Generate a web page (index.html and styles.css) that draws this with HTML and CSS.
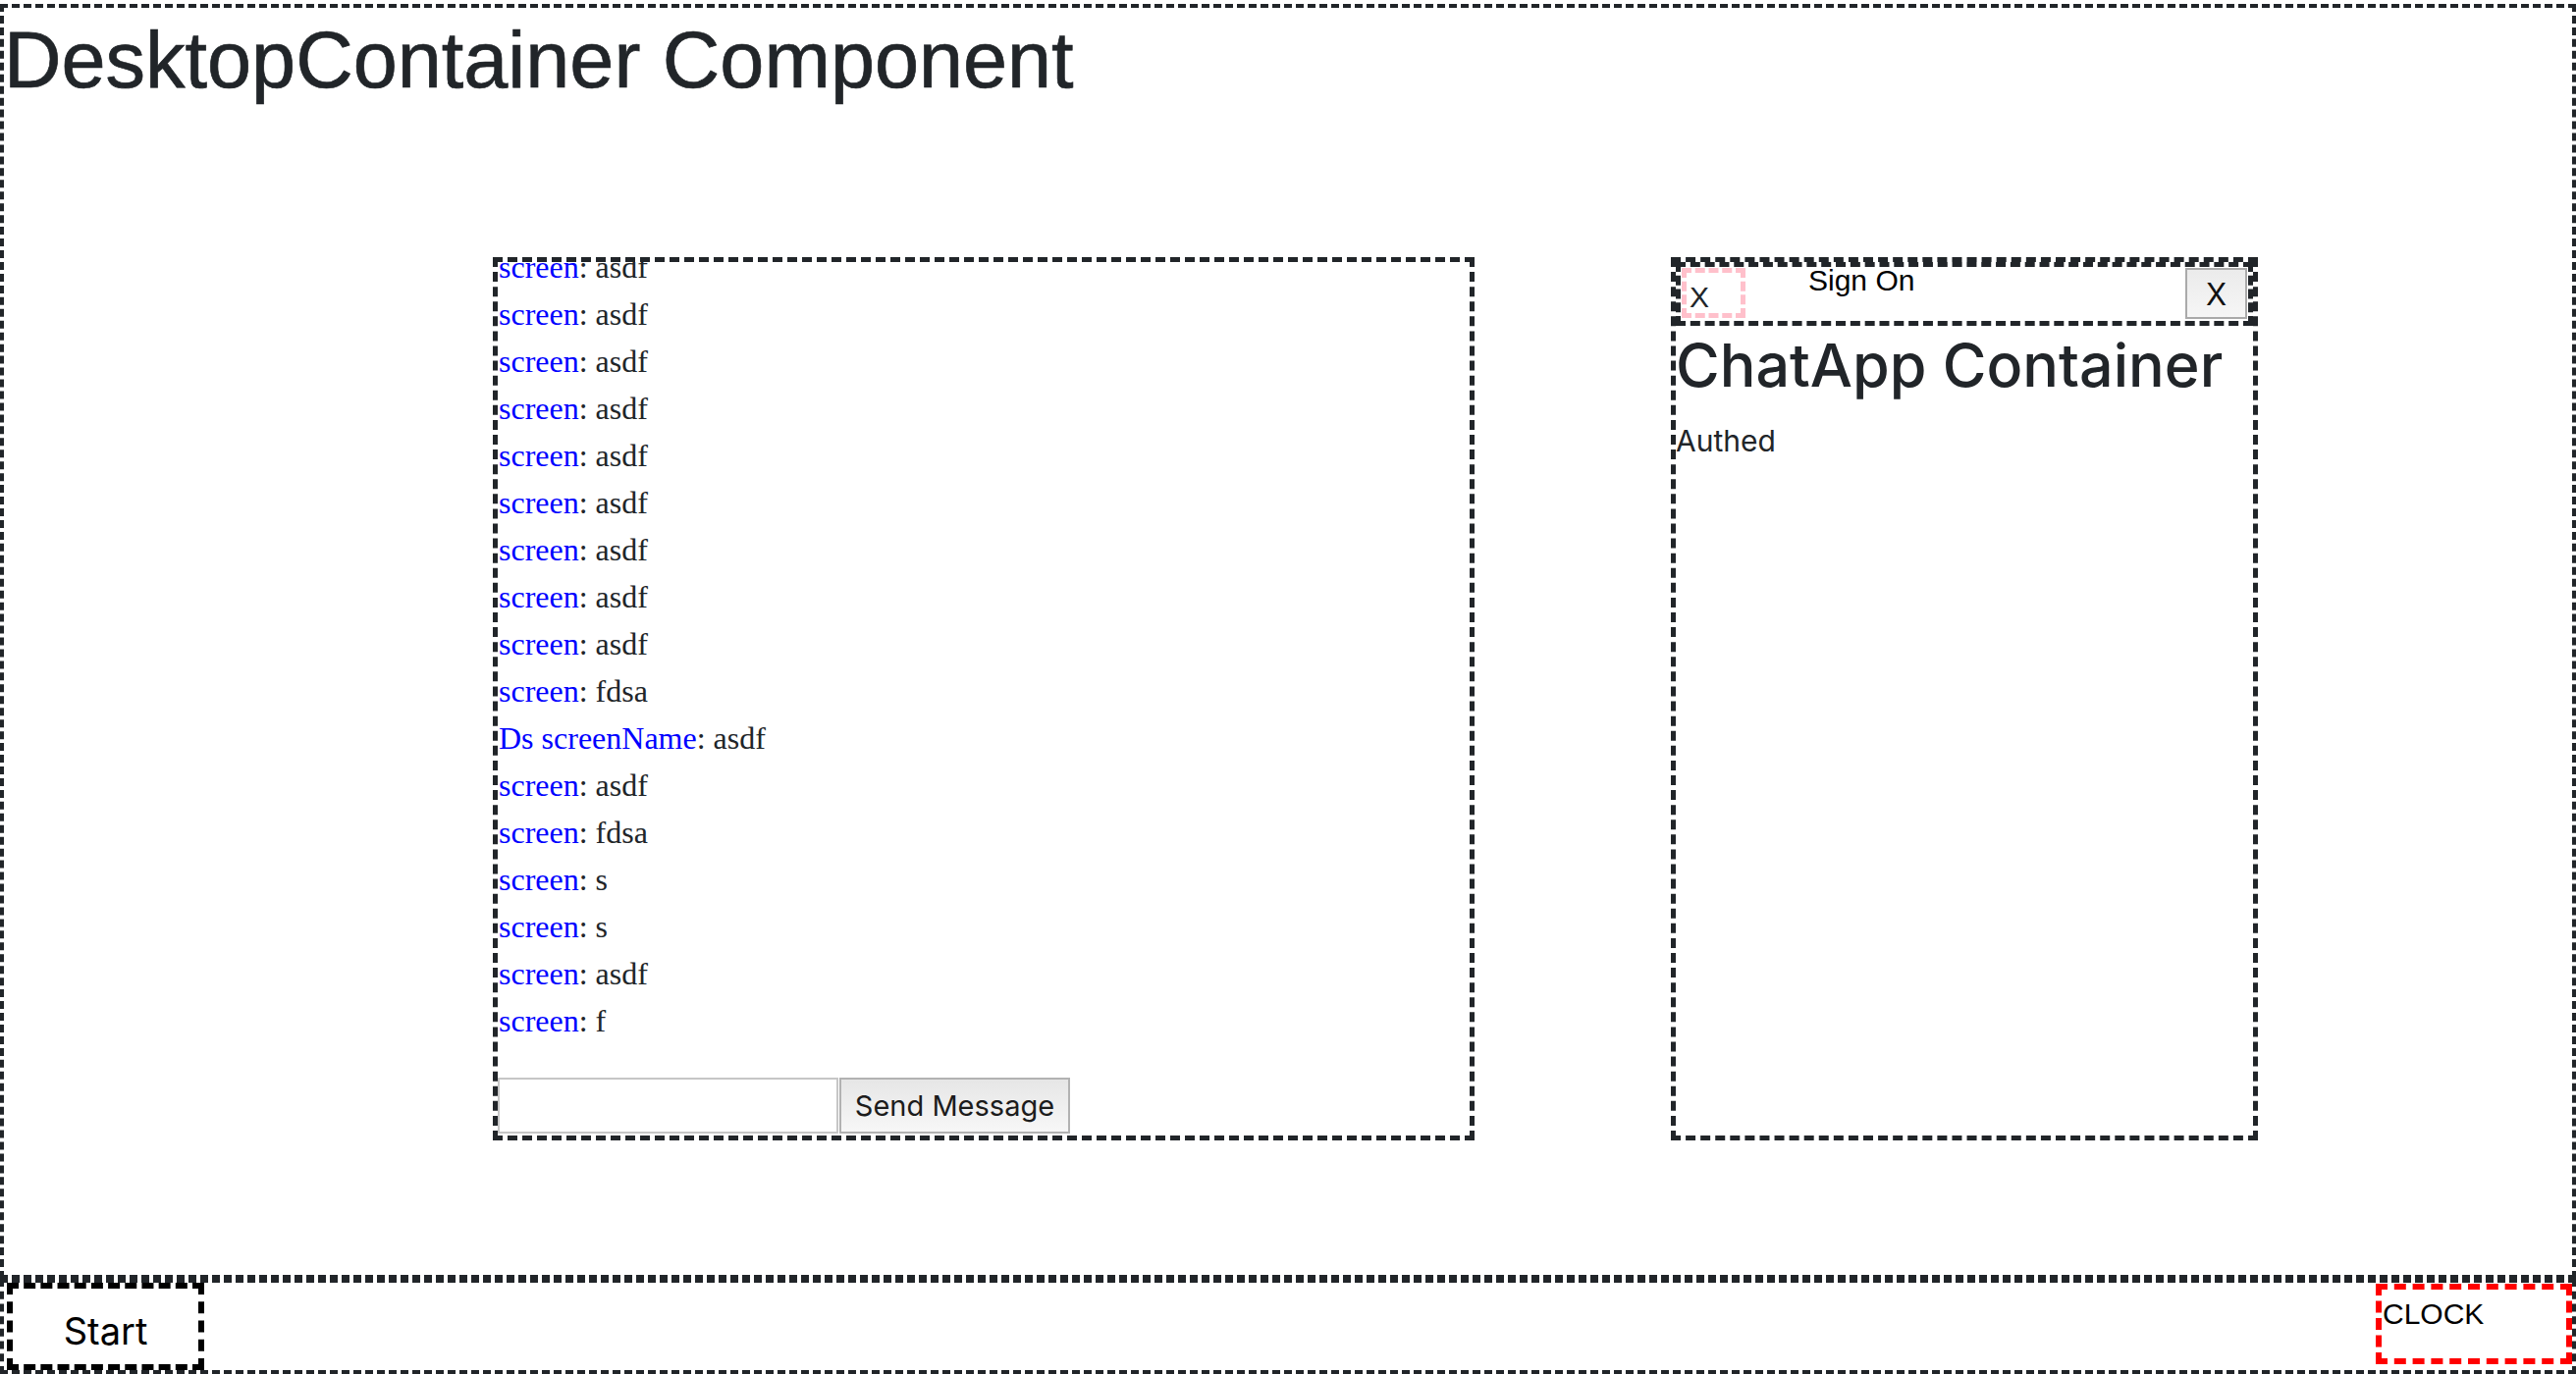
FILE: index.html
```html
<!DOCTYPE html>
<html lang="en">

<head>
    <meta charset="UTF-8">
    <title>Desktop</title>
    <meta name="viewport" content="width=device-width, initial-scale=1.0">
    <link rel="stylesheet" href="styles.css">
</head>

<body>
    <div class="desktop">
        <h1 class="desktop-title">DesktopContainer Component</h1>

        <div class="window chat-window">
            <div class="message-list">
                <div class="message"><span class="sender">screen</span>: asdf</div>
                <div class="message"><span class="sender">screen</span>: asdf</div>
                <div class="message"><span class="sender">screen</span>: asdf</div>
                <div class="message"><span class="sender">screen</span>: asdf</div>
                <div class="message"><span class="sender">screen</span>: asdf</div>
                <div class="message"><span class="sender">screen</span>: asdf</div>
                <div class="message"><span class="sender">screen</span>: asdf</div>
                <div class="message"><span class="sender">screen</span>: asdf</div>
                <div class="message"><span class="sender">screen</span>: asdf</div>
                <div class="message"><span class="sender">screen</span>: fdsa</div>
                <div class="message"><span class="sender">Ds screenName</span>: asdf</div>
                <div class="message"><span class="sender">screen</span>: asdf</div>
                <div class="message"><span class="sender">screen</span>: fdsa</div>
                <div class="message"><span class="sender">screen</span>: s</div>
                <div class="message"><span class="sender">screen</span>: s</div>
                <div class="message"><span class="sender">screen</span>: asdf</div>
                <div class="message"><span class="sender">screen</span>: f</div>
            </div>
            <form class="message-form">
                <input type="text" class="message-input">
                <button type="submit" class="send-btn">Send Message</button>
            </form>
        </div>

        <div class="window signon-window">
            <div class="title-bar">
                <div class="title-icon">X</div>
                <span class="title-text">Sign On</span>
                <button class="close-btn">X</button>
            </div>
            <div class="window-body">
                <h2>ChatApp Container</h2>
                <div class="status">Authed</div>
            </div>
        </div>
    </div>

    <div class="taskbar">
        <div class="start-btn">Start</div>
        <div class="clock">CLOCK</div>
    </div>
</body>

</html>
```

FILE: styles.css
```css
* {
    box-sizing: border-box;
}

body {
    margin: 0;
    padding-top: 4px;
    height: 100vh;
    display: flex;
    flex-direction: column;
    font-family: Inter, 'Noto Sans', sans-serif;
    color: #212529;
    background: #fff;
}

.desktop {
    flex: 1;
    position: relative;
    border: 4px dashed #212529;
    overflow: hidden;
}

.desktop-title {
    margin: 5px 0 0 0;
    font-family: 'Liberation Sans', Arial, sans-serif;
    font-size: 81px;
    font-weight: 400;
    line-height: 1.2;
    color: #212529;
    -webkit-text-stroke: 0.7px #212529;
}

.window {
    position: absolute;
    top: 254px;
    height: 900px;
    border: 5px dashed #212529;
    background: #fff;
    display: flex;
    flex-direction: column;
}

.chat-window {
    left: 498px;
    width: 1000px;
}

.signon-window {
    left: 1698px;
    width: 598px;
}

.message-list {
    flex: 1;
    min-height: 0;
    overflow: hidden;
    display: flex;
    flex-direction: column;
    justify-content: flex-end;
    margin-bottom: 34px;
}

.message {
    flex-shrink: 0;
    font-family: 'Liberation Serif', 'Times New Roman', serif;
    font-size: 32px;
    line-height: 48px;
    color: #212529;
    padding-left: 1px;
}

.sender {
    color: #0000ff;
}

.message-form {
    display: flex;
    align-items: center;
    gap: 1px;
    padding: 0 0 2px 0;
    margin: 0;
}

.message-input {
    width: 347px;
    height: 57px;
    border: 2px solid #c6c6c6;
    background: #fff;
    padding: 0 8px;
    font-size: 28px;
    outline: none;
}

.send-btn {
    width: 235px;
    height: 57px;
    border: 2px solid #b2b2b2;
    border-radius: 0;
    background: linear-gradient(#e6e6e6, #f7f7f7);
    font-family: Inter, sans-serif;
    font-size: 29px;
    color: #1c1c1c;
    padding: 0;
}

.title-bar {
    display: flex;
    align-items: flex-start;
    height: 65px;
    border: 5px dashed #212529;
    padding: 1px;
}

.title-icon {
    width: 65px;
    height: 51px;
    border: 5px dashed #ffc0cb;
    display: flex;
    align-items: flex-end;
    padding: 0 0 1px 3px;
    font-family: 'Liberation Sans', Arial, sans-serif;
    font-size: 30px;
    line-height: 1;
    color: #212529;
}

.title-text {
    margin-left: 64px;
    margin-right: auto;
    margin-top: -2px;
    font-family: 'Liberation Sans', Arial, sans-serif;
    font-size: 30px;
    line-height: 1;
    color: #000;
}

.close-btn {
    width: 63px;
    height: 52px;
    border: 2px solid #aaa;
    border-radius: 0;
    background: linear-gradient(#ebebeb, #f6f6f6);
    font-family: Inter, sans-serif;
    font-size: 31px;
    color: #111;
    padding: 0;
}

.window-body {
    flex: 1;
}

.window-body h2 {
    margin: 4px 0 18px 0;
    font-family: Inter, sans-serif;
    font-size: 61px;
    font-weight: 500;
    line-height: 1.2;
    color: #212529;
}

.status {
    font-size: 30px;
    line-height: 1.5;
    color: #212529;
}

.taskbar {
    height: 97px;
    border: 4px dashed #212529;
    display: flex;
    justify-content: space-between;
    align-items: flex-start;
}

.start-btn {
    width: 201px;
    align-self: stretch;
    margin-left: 3px;
    border: 6px dashed #000;
    display: flex;
    align-items: center;
    justify-content: center;
    padding-top: 8px;
    font-family: Inter, sans-serif;
    font-size: 38px;
    color: #000;
}

.clock {
    width: 200px;
    height: 82px;
    margin-top: 1px;
    border: 6px dashed #ff0000;
    padding: 8px 0 0 1px;
    font-family: 'Liberation Sans', Arial, sans-serif;
    font-size: 30px;
    color: #000;
}
```
